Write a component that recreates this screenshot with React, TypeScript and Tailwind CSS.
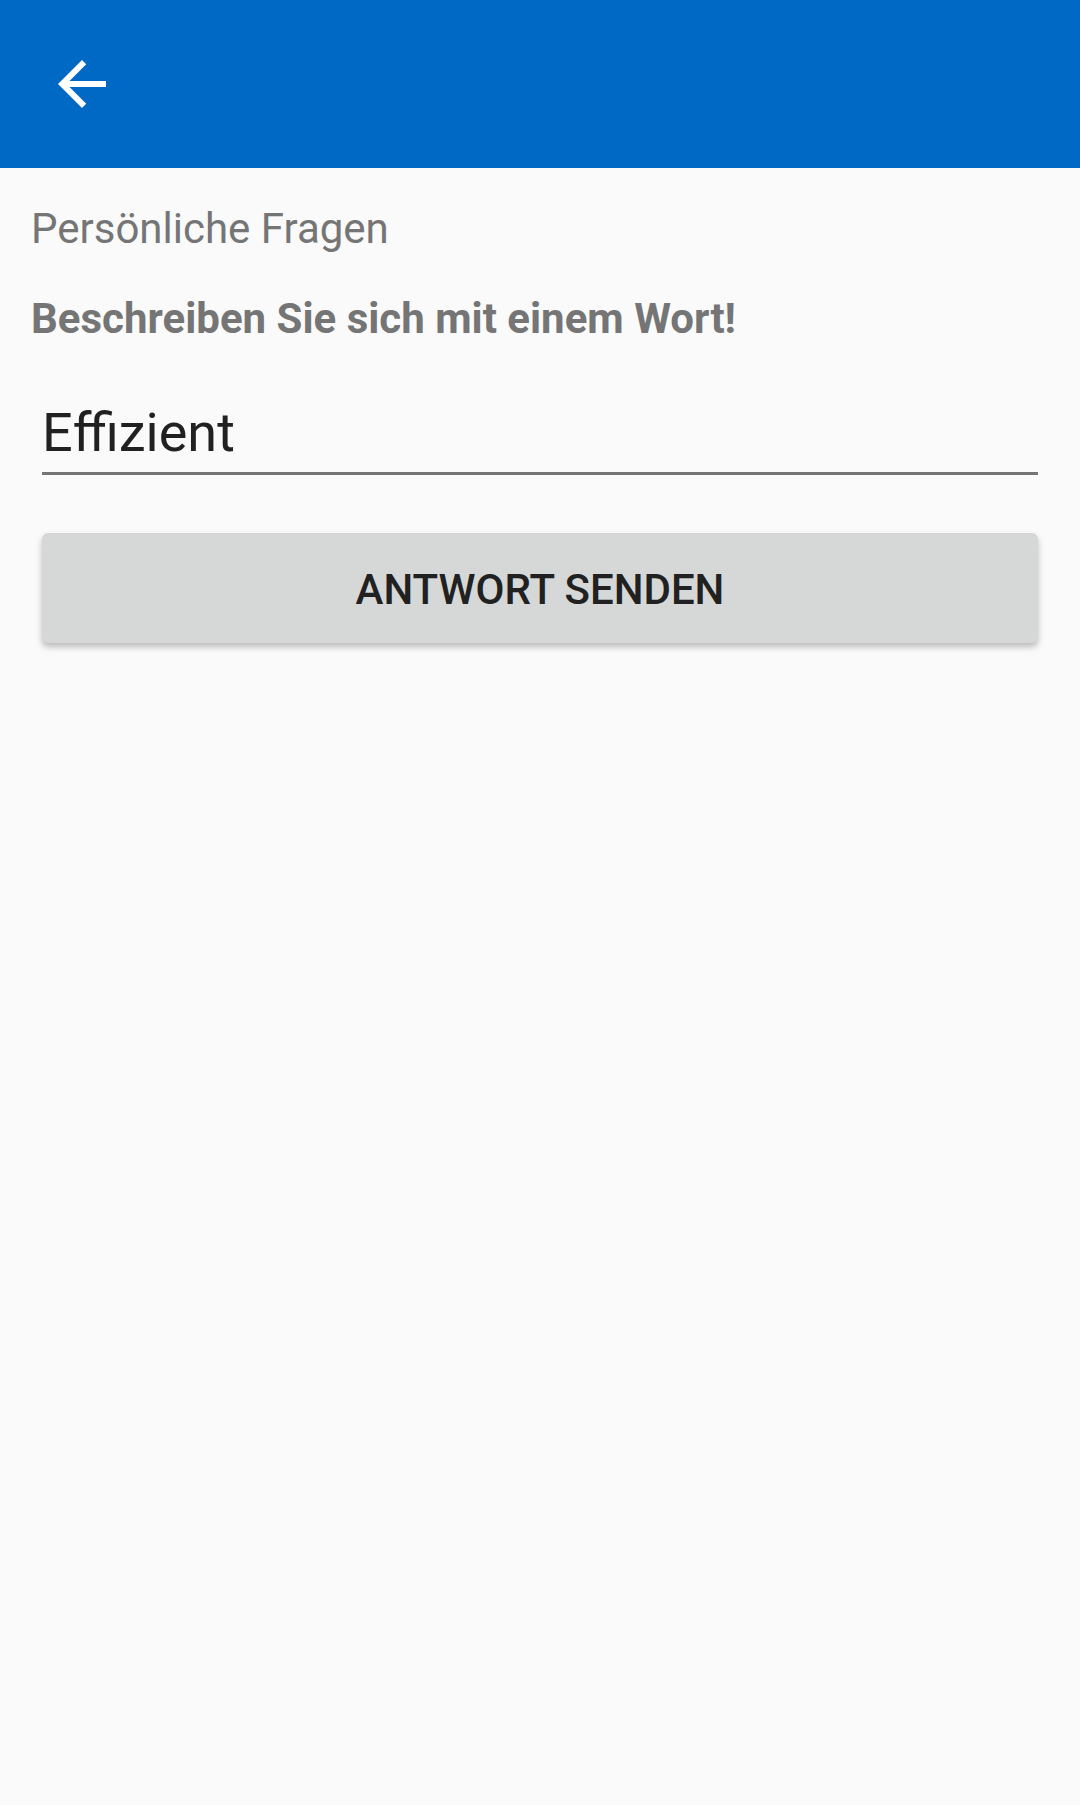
import React from "react";

export default function App() {
  return (
    <div className="min-h-[1805px] w-[1080px] bg-[#FAFAFA]" style={{ fontFamily: "Roboto, 'Noto Sans', sans-serif" }}>
      <div className="flex h-[168px] items-center bg-[#0069C6] pl-[46px]">
        <svg width="72" height="72" viewBox="0 0 24 24" fill="#FFFFFF">
          <path d="M20 11H7.83l5.59-5.59L12 4l-8 8 8 8 1.41-1.41L7.83 13H20v-2z" />
        </svg>
      </div>
      <div className="flex flex-col">
        <div className="mt-[36px] pl-[31px] text-[42px] leading-[49px] text-[#757575]">Persönliche Fragen</div>
        <div className="mt-[41px] pl-[31px] text-[42px] font-bold leading-[49px] text-[#757575]">
          Beschreiben Sie sich mit einem Wort!
        </div>
        <div className="mx-[42px] mt-[58px] border-b-[3px] border-[#757575] pb-[8px]">
          <div className="text-[54px] leading-[63px] text-[#212121]">Effizient</div>
        </div>
        <button className="mx-[42px] mt-[58px] flex h-[110px] items-center justify-center rounded-[6px] bg-[#D6D7D7] pt-[2px] text-[42px] font-medium text-[#212121] shadow-[0_4px_6px_rgba(0,0,0,0.25)]">
          ANTWORT SENDEN
        </button>
      </div>
    </div>
  );
}
